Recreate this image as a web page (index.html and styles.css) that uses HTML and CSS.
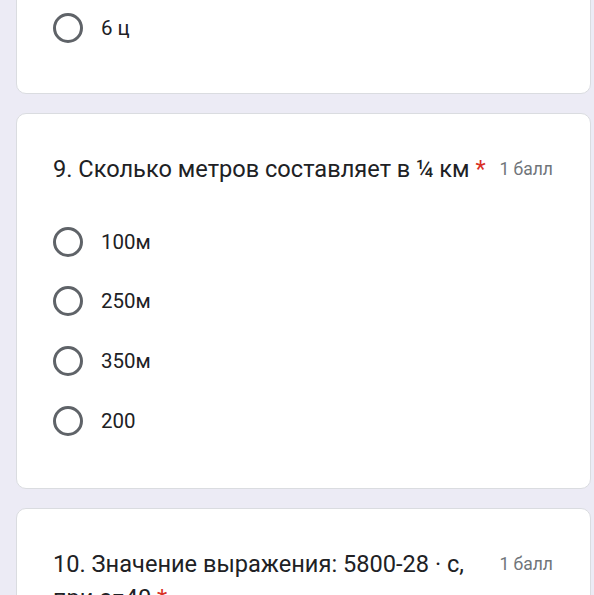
FILE: index.html
```html
<!DOCTYPE html>
<html lang="ru">
<head>
  <meta charset="UTF-8">
  <title>Тест</title>
  <link rel="stylesheet" href="styles.css">
</head>
<body>
  <div class="form">

    <div class="card card-cut">
      <label class="option"><span class="radio"></span><span class="option-text">6 ц</span></label>
    </div>

    <div class="card">
      <div class="question">
        <div class="title">9. Сколько метров составляет в ¼ км <span class="req">*</span></div>
        <div class="points">1 балл</div>
      </div>
      <div class="options">
        <label class="option"><span class="radio"></span><span class="option-text">100м</span></label>
        <label class="option"><span class="radio"></span><span class="option-text">250м</span></label>
        <label class="option"><span class="radio"></span><span class="option-text">350м</span></label>
        <label class="option"><span class="radio"></span><span class="option-text">200</span></label>
      </div>
    </div>

    <div class="card">
      <div class="question">
        <div class="title">10. Значение выражения: 5800-28 · с, при с=40 <span class="req">*</span></div>
        <div class="points">1 балл</div>
      </div>
      <div class="options">
        <label class="option"><span class="radio"></span><span class="option-text">4680</span></label>
      </div>
    </div>

  </div>
</body>
</html>
```

FILE: styles.css
```css
body { margin: 0; background: #ecebf5; font-family: Roboto, "Liberation Sans", sans-serif; color: #202124; overflow: hidden; }
.form { padding: 0 3px 0 16px; }
.card { background: #fff; border: 1px solid #dadce0; border-radius: 10px; padding: 38px 37px 38px 36px; margin-bottom: 19px; }
.card-cut { margin-top: -43px; padding-top: 40px; padding-bottom: 35px; }
.question { display: flex; align-items: flex-start; gap: 12px; }
.title { flex: 1; font-size: 23.6px; line-height: 34px; }
.req { color: #d93025; }
.points { font-size: 17.5px; color: #70757a; line-height: 34px; white-space: nowrap; }
.options { margin-top: 26px; }
.option { display: flex; align-items: center; height: 59.7px; }
.radio { width: 24px; height: 24px; border: 3px solid #5f6368; border-radius: 50%; flex-shrink: 0; }
.option-text { font-size: 20.5px; margin-left: 18px; }
```
